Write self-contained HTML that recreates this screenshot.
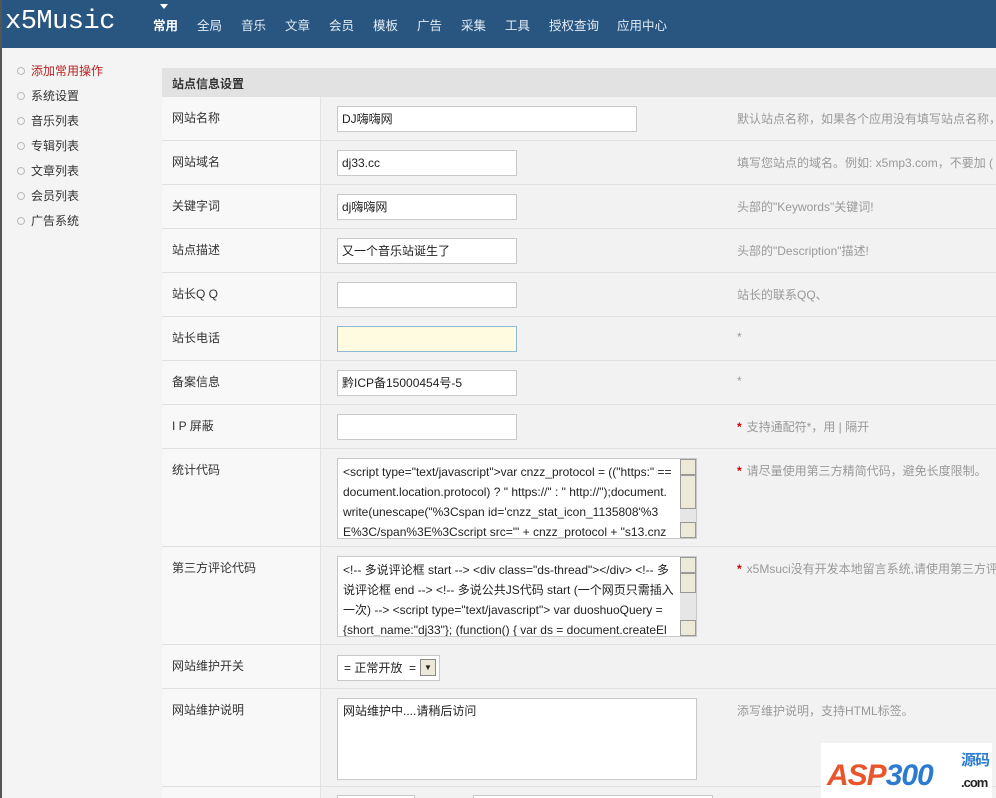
<!DOCTYPE html>
<html style="width:996px;height:798px;overflow:hidden"><head><meta charset="utf-8"><style>
*{margin:0;padding:0;box-sizing:border-box}
body{width:996px;height:798px;overflow:hidden;background:#f4f4f4;font:12px "Liberation Sans","Noto Sans CJK SC",sans-serif;color:#333;position:relative;border-left:2px solid #555}
#hd{position:absolute;left:0;top:0;width:994px;height:48px;background:#285681}
#logo{position:absolute;left:3px;top:7px;color:#fff;font:27px "Liberation Mono","DejaVu Sans Mono",monospace;letter-spacing:-0.5px}
.nav{position:absolute;top:15px;color:#e4ecf4;font-size:12.5px}
.nav.on{color:#fff;font-weight:bold}
#side{position:absolute;left:0;top:48px;width:148px;height:750px;background:#f4f4f4}
.sl{position:absolute;left:29px;font-size:12px;color:#333}
.sl:before{content:"";position:absolute;left:-14px;top:5px;width:6px;height:6px;border:1px solid #bbb;border-radius:50%}
#main{position:absolute;left:160px;top:68px;width:834px;height:730px;background:#f2f2f2;overflow:hidden}
#th{position:absolute;left:0;top:0;width:834px;height:28px;background:#e2e2e2;font-weight:bold;font-size:12px;padding:7px 10px;color:#333}
.row{position:absolute;left:0;width:834px;border-top:1px solid #e0e0e0}
.lab{position:absolute;left:0;top:0;bottom:0;width:159px;background:#f8f8f8;border-right:1px solid #e2e2e2;padding:12px 10px;font-size:12px}
.inp{position:absolute;left:175px;height:26px;background:#fff;border:1px solid #c8c8c8;padding:0 4px;line-height:24px;font-size:12px;color:#222}
.tip{position:absolute;left:575px;color:#999;font-size:12px;white-space:nowrap}
.st{color:#c00;font-weight:bold;margin-right:5px}
.ta{position:absolute;left:175px;width:360px;height:81px;background:#fff;border:1px solid #c8c8c8;padding:3px 20px 3px 5px;font-size:12px;line-height:20px;color:#222;overflow:hidden}
.sb{position:absolute;right:0;top:0;width:16px;height:79px;background:#e6e6e6}
.sb i{position:absolute;left:0;width:16px;background:#ece9d8;border:1px solid #999}
</style></head><body>
<div id="hd"><div id="logo">x5Music</div>
<span class="nav on" style="left:151px">常用</span>
<span style="position:absolute;left:158px;top:4px;width:0;height:0;border:4px solid transparent;border-top:5px solid #fff"></span>
<span class="nav" style="left:195px">全局</span><span class="nav" style="left:239px">音乐</span><span class="nav" style="left:283px">文章</span><span class="nav" style="left:327px">会员</span><span class="nav" style="left:371px">模板</span><span class="nav" style="left:415px">广告</span><span class="nav" style="left:459px">采集</span><span class="nav" style="left:503px">工具</span><span class="nav" style="left:547px">授权查询</span><span class="nav" style="left:615px">应用中心</span>
</div>
<div id="side">
<span class="sl" style="top:14px;color:#b22">添加常用操作</span>
<span class="sl" style="top:39px">系统设置</span>
<span class="sl" style="top:64px">音乐列表</span>
<span class="sl" style="top:89px">专辑列表</span>
<span class="sl" style="top:114px">文章列表</span>
<span class="sl" style="top:139px">会员列表</span>
<span class="sl" style="top:164px">广告系统</span>
</div>
<div id="main">
<div id="th">站点信息设置</div>
<div class="row" style="top:28px;height:44px"><div class="lab">网站名称</div><div class="inp" style="top:9px;width:300px">DJ嗨嗨网</div><div class="tip" style="top:13px">默认站点名称，如果各个应用没有填写站点名称，</div></div>
<div class="row" style="top:72px;height:44px"><div class="lab">网站域名</div><div class="inp" style="top:9px;width:180px">dj33.cc</div><div class="tip" style="top:13px">填写您站点的域名。例如: x5mp3.com，不要加 (</div></div>
<div class="row" style="top:116px;height:44px"><div class="lab">关键字词</div><div class="inp" style="top:9px;width:180px">dj嗨嗨网</div><div class="tip" style="top:13px">头部的"Keywords"关键词!</div></div>
<div class="row" style="top:160px;height:44px"><div class="lab">站点描述</div><div class="inp" style="top:9px;width:180px">又一个音乐站诞生了</div><div class="tip" style="top:13px">头部的"Description"描述!</div></div>
<div class="row" style="top:204px;height:44px"><div class="lab">站长Q Q</div><div class="inp" style="top:9px;width:180px"></div><div class="tip" style="top:13px">站长的联系QQ、</div></div>
<div class="row" style="top:248px;height:44px"><div class="lab">站长电话</div><div class="inp" style="top:9px;width:180px;background:#fffbe0;border:1px solid #8fb8d8"></div><div class="tip" style="top:13px">*</div></div>
<div class="row" style="top:292px;height:44px"><div class="lab">备案信息</div><div class="inp" style="top:9px;width:180px">黔ICP备15000454号-5</div><div class="tip" style="top:13px">*</div></div>
<div class="row" style="top:336px;height:44px"><div class="lab">I P 屏蔽</div><div class="inp" style="top:9px;width:180px"></div><div class="tip" style="top:13px"><span class="st">*</span>支持通配符*，用 | 隔开</div></div>
<div class="row" style="top:380px;height:98px"><div class="lab">统计代码</div><div class="ta" style="top:9px">&lt;script type="text/javascript"&gt;var cnzz_protocol = (("https:" == document.location.protocol) ? " https://" : " http://");document. write(unescape("%3Cspan id='cnzz_stat_icon_1135808'%3 E%3C/span%3E%3Cscript src='" + cnzz_protocol + "s13.cnz<div class="sb"><i style="top:0;height:16px"></i><i style="top:16px;height:34px"></i><i style="top:63px;height:16px"></i></div></div><div class="tip" style="top:13px"><span class="st">*</span>请尽量使用第三方精简代码，避免长度限制。</div></div>
<div class="row" style="top:478px;height:98px"><div class="lab">第三方评论代码</div><div class="ta" style="top:9px">&lt;!-- 多说评论框 start --&gt; &lt;div class="ds-thread"&gt;&lt;/div&gt; &lt;!-- 多说评论框 end --&gt; &lt;!-- 多说公共JS代码 start (一个网页只需插入一次) --&gt; &lt;script type="text/javascript"&gt; var duoshuoQuery = {short_name:"dj33"}; (function() { var ds = document.createEl<div class="sb"><i style="top:0;height:16px"></i><i style="top:16px;height:20px"></i><i style="top:63px;height:16px"></i></div></div><div class="tip" style="top:13px"><span class="st">*</span>x5Msuci没有开发本地留言系统,请使用第三方评</div></div>
<div class="row" style="top:576px;height:44px"><div class="lab">网站维护开关</div><div class="inp" style="top:10px;width:103px;padding:0 6px">= 正常开放 &nbsp;=<span style="position:absolute;right:3px;top:3px;width:16px;height:17px;background:#ece9d8;border:1px solid #888;font-size:8px;text-align:center;line-height:15px">▼</span></div></div>
<div class="row" style="top:620px;height:98px"><div class="lab">网站维护说明</div><div class="ta" style="top:9px;height:82px;padding:2px 5px">网站维护中....请稍后访问</div><div class="tip" style="top:13px">添写维护说明，支持HTML标签。</div></div>
<div class="row" style="top:718px;height:20px"><div class="lab"></div><div class="inp" style="top:8px;width:78px"></div><div class="inp" style="top:8px;left:311px;width:240px"></div></div>
</div>
<div style="position:absolute;left:819px;top:743px;width:171px;height:55px;background:#fff;font:bold italic 30px 'Liberation Sans',sans-serif;color:#e8552a;padding:16px 0 0 6px;letter-spacing:-1px">ASP<span style="color:#2b7bd0">300</span><span style="position:absolute;left:140px;top:6px;font:bold 15px 'Noto Sans CJK SC',sans-serif;color:#2b7bd0;font-style:normal">源码</span><span style="position:absolute;left:140px;top:32px;font:bold 13px 'Liberation Sans',sans-serif;color:#222">.com</span></div>
</body></html>
